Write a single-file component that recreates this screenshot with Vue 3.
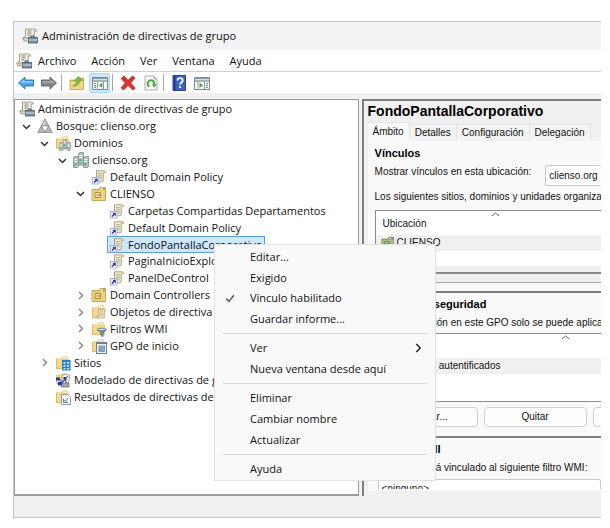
<script setup>
import { ref } from 'vue'

const menus = ['Archivo', 'Acción', 'Ver', 'Ventana', 'Ayuda']

const tree = [
  { level: 0, icon: 'console', text: 'Administración de directivas de grupo' },
  { level: 1, icon: 'forest', text: 'Bosque: clienso.org', state: 'open' },
  { level: 2, icon: 'domains', text: 'Dominios', state: 'open' },
  { level: 3, icon: 'domain', text: 'clienso.org', state: 'open' },
  { level: 4, icon: 'link', text: 'Default Domain Policy' },
  { level: 4, icon: 'ou', text: 'CLIENSO', state: 'open' },
  { level: 5, icon: 'link', text: 'Carpetas Compartidas Departamentos' },
  { level: 5, icon: 'link', text: 'Default Domain Policy' },
  { level: 5, icon: 'link', text: 'FondoPantallaCorporativo' },
  { level: 5, icon: 'link', text: 'PaginaInicioExplorador' },
  { level: 5, icon: 'link', text: 'PanelDeControl' },
  { level: 4, icon: 'ou', text: 'Domain Controllers', state: 'closed' },
  { level: 4, icon: 'objects', text: 'Objetos de directiva de grupo', state: 'closed' },
  { level: 4, icon: 'filters', text: 'Filtros WMI', state: 'closed' },
  { level: 4, icon: 'starter', text: 'GPO de inicio', state: 'closed' },
  { level: 2, icon: 'sites', text: 'Sitios', state: 'closed' },
  { level: 2, icon: 'modeling', text: 'Modelado de directivas de grupo' },
  { level: 2, icon: 'results', text: 'Resultados de directivas de grupo' },
]
const selected = ref(8)

const tabs = ['Ámbito', 'Detalles', 'Configuración', 'Delegación']
const activeTab = ref(0)

const contextMenu = [
  [{ text: 'Editar...' }, { text: 'Exigido' }, { text: 'Vínculo habilitado', checked: true }, { text: 'Guardar informe...' }],
  [{ text: 'Ver', submenu: true }, { text: 'Nueva ventana desde aquí' }],
  [{ text: 'Eliminar' }, { text: 'Cambiar nombre' }, { text: 'Actualizar' }],
  [{ text: 'Ayuda' }],
]
</script>

<template>
  <div class="desktop">
    <svg class="sprite" aria-hidden="true">
      <symbol id="folder" viewBox="0 0 16 16">
        <path d="M1 3.500h5.500l1-2H13v2.500h1V14H1z" fill="#e2bf67" />
        <path d="M8 2.300h4.500v1.500H7.200z" fill="#f8f4e3" />
        <path d="M1 3.500h5.500l1 1H14V14H1z" fill="#f3d98d" />
        <path d="M1.500 4v9.500h12" fill="none" stroke="#dcbb68" />
      </symbol>
      <symbol id="server" viewBox="0 0 6 12">
        <path d="M.5 1.500 2 .5h3.500v10L4.500 11.500h-4z" fill="#b4c0c2" stroke="#7c8c8f" stroke-width=".8" />
        <path d="M1.200 3.500h3M1.200 5.500h3" stroke="#eef4f4" />
        <rect x="1.500" y="7.200" width="2" height="2" fill="#3fbf3f" />
      </symbol>
      <symbol id="scroll" viewBox="0 0 16 16">
        <path d="M4 1.500h8.500q2 0 2 2H12V12q0 2-2 2H2.500q-1.500 0-1.500-2h3z" fill="#f5f1dc" stroke="#8f8869" stroke-width=".9" />
        <path d="M12 3.500q0-2 1.500-2t1.300 2z" fill="#d9c98c" />
        <path d="M9.800 3H12v9.500q-.5 1-2.200 1z" fill="#e3d9ac" />
        <path d="M5.500 4.500h4.500M5.500 6.500h4.500M5.500 8.500h4.500M5.500 10.500h4.500" stroke="#99977f" stroke-width=".8" />
      </symbol>
      <symbol id="console" viewBox="0 0 16 16">
        <path d="M3.500 1h9q2 0 2 2h-2.300v8H1q-.5-2 2.500-2z" fill="#f2efe1" stroke="#8d8a7c" stroke-width=".8" />
        <path d="M1 10h8v3H2q-1.200-1-1-3z" fill="#d8d4c2" stroke="#8d8a7c" stroke-width=".7" />
        <path d="M5.500 3h4M5.500 5h4M5.500 7h3" stroke="#85837a" />
        <path d="M9 9.500V8h3v1.500" fill="none" stroke="#3c4854" />
        <rect x="6.500" y="9.500" width="9" height="5.500" fill="#7b90a3" stroke="#4b5b6a" stroke-width=".8" />
        <path d="M6.500 12h9" stroke="#d3dde6" />
      </symbol>
      <symbol id="forest" viewBox="0 0 16 16">
        <path d="M8 1 15.200 14.500H.8z" fill="#dcdcdc" stroke="#777" stroke-width=".9" />
        <path d="M8 1v6.500h3.500zM4.300 8 8 14.500H.8zM11.700 8l3.500 6.500H8z" fill="#b4b4b4" />
        <path d="M4.300 7.800h7.400L8 14.500z" fill="#fafafa" stroke="#777" stroke-width=".8" />
      </symbol>
      <symbol id="domain" viewBox="0 0 16 16">
        <use href="#server" x="5" y="0" width="6" height="12" />
        <use href="#server" x="0" y="4" width="6" height="12" />
        <use href="#server" x="10" y="4" width="6" height="12" />
        <path d="M5.500 13h5" stroke="#66787b" />
      </symbol>
      <symbol id="domains" viewBox="0 0 16 16">
        <use href="#folder" width="16" height="16" />
        <use href="#domain" x="4" y="4" width="12" height="12" />
      </symbol>
      <symbol id="link" viewBox="0 0 16 16">
        <use href="#scroll" x="2" y="0" width="14" height="15" />
        <rect x="1.500" y="8.500" width="6.500" height="6.500" fill="#f4f5fc" stroke="#9ea3c4" stroke-width=".8" />
        <path d="M3 13.500 5.800 10.700" stroke="#22308f" stroke-width="1.400" />
        <path d="M3.300 9.800h3.400v3.400z" fill="#22308f" />
      </symbol>
      <symbol id="ou" viewBox="0 0 16 16">
        <path d="M1 3.500h7l1-2h5.500v13H1z" fill="#e4be60" stroke="#bd983f" stroke-width=".8" />
        <path d="M9.500 2.500H12v1H9z" fill="#fff" /><path d="M12 2.500h2v1h-2z" fill="#3f91dc" />
        <path d="M1.500 4.500h12.500V14H1.500z" fill="#efd07c" />
        <path d="M4 6.500h5.500v5H4z" fill="#f6e2a8" stroke="#a98c45" />
        <path d="M5.500 9h4" stroke="#94793a" />
      </symbol>
      <symbol id="objects" viewBox="0 0 16 16">
        <use href="#folder" width="16" height="16" />
        <use href="#scroll" x="5" y="4" width="11" height="12" />
      </symbol>
      <symbol id="filters" viewBox="0 0 16 16">
        <use href="#folder" width="16" height="16" />
        <path d="M6 8.500h9.500L12 12v3.500l-2-1V12z" fill="#7c94a8" stroke="#536b80" stroke-width=".8" />
        <ellipse cx="10.700" cy="8.500" rx="4.600" ry="1.300" fill="#c6d8e6" stroke="#536b80" stroke-width=".7" />
      </symbol>
      <symbol id="starter" viewBox="0 0 16 16">
        <use href="#folder" width="16" height="16" />
        <rect x="5.500" y="4.500" width="10" height="11" fill="#e9f1f8" stroke="#6d7f92" />
        <path d="M5.500 5.500h10" stroke="#6d7f92" />
        <path d="M8 8h5.500v5.500H8z" fill="#a9c5df" stroke="#56789b" stroke-width=".7" />
        <path d="M8 10h5M8 12h5" stroke="#56789b" stroke-width=".7" />
      </symbol>
      <symbol id="sites" viewBox="0 0 16 16">
        <use href="#folder" width="16" height="16" />
        <rect x="7" y="5" width="8.500" height="10.500" fill="#2b7ccc" />
        <path d="M8.500 7h2v1.800h-2zM12 7h2v1.800h-2zM8.500 10h2v1.800h-2zM12 10h2v1.800h-2zM8.500 13h2v1.500h-2zM12 13h2v1.500h-2z" fill="#d2ecff" />
      </symbol>
      <symbol id="modeling" viewBox="0 0 16 16">
        <path d="M1 2.500h5l1-1h5V12H1z" fill="#ead28f" />
        <path d="M7 3.500q4-3 8 0L13 12H7z" fill="#f1eee2" stroke="#9a988b" stroke-width=".8" />
        <path d="M1 5.500h4v3H1zM3 10h4v3.500H3zM8.500 5h3v3h-3z" fill="#2637a9" />
        <path d="m5 8 3 2 5-6M6 13l4-6 2 6" fill="none" stroke="#434d9d" />
        <path d="M8 11h6v4H6z" fill="#a5a8ad" stroke="#666" stroke-width=".7" />
      </symbol>
      <symbol id="results" viewBox="0 0 16 16">
        <use href="#folder" width="16" height="16" />
        <path d="M6.500 5.500h6l3 3v7h-9z" fill="#f8f9fa" stroke="#8c9298" stroke-width=".9" />
        <path d="M8.500 9.500v4h4.500M9 11l1.500 1.500 2.500-3.500" fill="none" stroke="#4878a8" stroke-width=".9" />
      </symbol>
      <symbol id="back" viewBox="0 0 16 16">
        <path d="M.5 8 7 2v3h8.500v6H7v3z" fill="#4ba3e3" stroke="#2477b8" stroke-width=".9" />
        <path d="M2.300 7.800 6.300 4.300v2h8.200v1.500z" fill="#91d0f6" />
      </symbol>
      <symbol id="forward" viewBox="0 0 16 16">
        <path d="M15.500 8 9 2v3H.5v6H9v3z" fill="#868686" stroke="#606060" stroke-width=".9" />
        <path d="M13.700 7.800 9.700 4.300v2H1.500v1.500z" fill="#acacac" />
      </symbol>
      <symbol id="up" viewBox="0 0 16 16">
        <path d="M1 5h6l1-2h6.500v11.500H1z" fill="#e3bc5c" stroke="#c0983a" stroke-width=".7" />
        <path d="M1.500 6.500H14V14H1.500z" fill="#f2d687" />
        <path d="M3.500 11q3.500-.5 4-5.500H5.300L9.500 1.500 13 5.500h-2.300q-.7 6-7.200 5.500z" fill="#7cc04c" stroke="#4f9630" stroke-width=".6" />
      </symbol>
      <symbol id="panel-left" viewBox="0 0 16 16">
        <path d="M.5 2.500h15v12H.5z" fill="#f8f9fa" stroke="#7d8791" />
        <path d="M1 3.500h14M1 6h14" stroke="#8e98a2" stroke-width="1.300" />
        <path d="M5.500 7v7.500M11.500 7v7.500" stroke="#8e98a2" />
        <path d="M2 8.500h2M2 10.500h2M2 12.500h2" stroke="#6886a3" />
        <path d="M10.300 7.800v5L7 10.300z" fill="#3ea535" />
      </symbol>
      <symbol id="panel-right" viewBox="0 0 16 16">
        <path d="M.5 2.500h15v12H.5z" fill="#f8f9fa" stroke="#7d8791" />
        <path d="M1 3.500h14M1 6h14" stroke="#8e98a2" stroke-width="1.300" />
        <path d="M4 7v7.500M10.500 7v7.500" stroke="#8e98a2" />
        <path d="M12 8.500h2M12 10.500h2M12 12.500h2" stroke="#6886a3" />
        <path d="M5.500 7.800v5L9 10.300z" fill="#3ea535" />
      </symbol>
      <symbol id="delete" viewBox="0 0 16 16">
        <path d="M1 3.500 4 1l4 4.300L12.500 1 15 3l-4.300 5 4.500 5.300L13 15l-5-4.500L3.500 15 1 12.800 5.300 8z" fill="#dc342c" stroke="#a81e1b" stroke-width=".7" />
      </symbol>
      <symbol id="refresh" viewBox="0 0 16 16">
        <path d="M2 1h9l3 3v11H2z" fill="#f7f8f7" stroke="#a0a5a0" stroke-width=".9" />
        <path d="M11 1v3h3" fill="#ddd" stroke="#a0a5a0" stroke-width=".8" />
        <path d="M6.300 11.500A3.300 3.300 0 1 1 11.200 9" fill="none" stroke="#45a73a" stroke-width="1.800" />
        <path d="m8.700 9 5 .2-2.500 3.300z" fill="#45a73a" />
      </symbol>
      <symbol id="help" viewBox="0 0 16 16">
        <path d="M2 .5h12.500v15H2z" fill="#3e62c4" stroke="#27408f" />
        <path d="M3.500 1v14" stroke="#223a91" stroke-width="2" />
        <path d="M6.500 5.500q0-2.300 2.600-2.300t2.600 2.300c0 2-2.600 2-2.600 4.200M9.100 11v2" fill="none" stroke="#fff" stroke-width="1.800" />
      </symbol>
    </svg>

    <main class="window">
      <header class="titlebar">
        <svg class="icon"><use href="#console" /></svg>
        <h1>Administración de directivas de grupo</h1>
      </header>

      <nav class="menubar" aria-label="Menú">
        <svg class="icon"><use href="#console" /></svg>
        <button v-for="m in menus" :key="m" type="button">{{ m }}</button>
      </nav>

      <div class="toolbar" role="toolbar">
        <button type="button" aria-label="Atrás"><svg class="icon"><use href="#back" /></svg></button>
        <button type="button" aria-label="Adelante"><svg class="icon"><use href="#forward" /></svg></button>
        <i class="rule"></i>
        <button type="button" aria-label="Subir un nivel"><svg class="icon"><use href="#up" /></svg></button>
        <button type="button" class="pressed" aria-label="Árbol de consola"><svg class="icon"><use href="#panel-left" /></svg></button>
        <i class="rule"></i>
        <button type="button" aria-label="Eliminar"><svg class="icon"><use href="#delete" /></svg></button>
        <button type="button" aria-label="Actualizar"><svg class="icon"><use href="#refresh" /></svg></button>
        <i class="rule"></i>
        <button type="button" aria-label="Ayuda"><svg class="icon"><use href="#help" /></svg></button>
        <button type="button" aria-label="Panel de acciones"><svg class="icon"><use href="#panel-right" /></svg></button>
      </div>

      <div class="work">
        <section class="tree-pane">
          <ul class="tree" role="tree">
            <li v-for="(n, i) in tree" :key="i" role="treeitem" :class="['node', 'level-' + n.level]">
              <span v-if="n.level" class="twisty">
                <svg v-if="n.state" :class="n.state" viewBox="0 0 9 9"><path d="m1 3 3.500 3.500L8 3" /></svg>
              </span>
              <button type="button" :class="['label', { selected: selected === i }]" @click="selected = i">
                <svg class="icon"><use :href="'#' + n.icon" /></svg>
                <span>{{ n.text }}</span>
              </button>
            </li>
          </ul>
        </section>

        <section class="detail">
          <h2>FondoPantallaCorporativo</h2>
          <div class="tabs" role="tablist">
            <button v-for="(t, i) in tabs" :key="t" type="button" role="tab" :class="{ active: activeTab === i }" @click="activeTab = i">{{ t }}</button>
          </div>
          <div class="page">
            <div class="block links">
              <h3>Vínculos</h3>
              <div class="field">
                <label for="place">Mostrar vínculos en esta ubicación:</label>
                <select id="place"><option>clienso.org</option></select>
              </div>
              <p>Los siguientes sitios, dominios y unidades organizativas están vinculados a este GPO:</p>
              <table class="list">
                <thead><tr><th>Ubicación<svg class="sort" viewBox="0 0 9 5"><path d="m1 4 3.500-3L8 4" /></svg></th></tr></thead>
                <tbody><tr><td><svg class="icon ou-muted"><use href="#ou" /></svg>CLIENSO</td></tr></tbody>
              </table>
            </div>
            <div class="divider"></div>
            <div class="block security">
              <h3>Filtrado de seguridad</h3>
              <p>La configuración en este GPO solo se puede aplicar a los siguientes grupos, usuarios y equipos:</p>
              <table class="list">
                <thead><tr><th>Nombre<svg class="sort" viewBox="0 0 9 5"><path d="m1 4 3.500-3L8 4" /></svg></th></tr></thead>
                <tbody><tr><td><svg class="icon"><use href="#domain" /></svg>Usuarios autentificados</td></tr></tbody>
              </table>
              <div class="actions">
                <button type="button">Agregar...</button>
                <button type="button">Quitar</button>
                <button type="button" disabled>Propiedades</button>
              </div>
            </div>
            <div class="block wmi">
              <h3>Filtrado WMI</h3>
              <label for="wmi">Este GPO está vinculado al siguiente filtro WMI:</label>
              <div class="clip"><select id="wmi"><option>&lt;ninguno&gt;</option></select></div>
            </div>
          </div>
        </section>
      </div>
      <footer class="status"></footer>
    </main>

    <div class="context" role="menu">
      <div v-for="(group, g) in contextMenu" :key="g" class="group">
        <button v-for="item in group" :key="item.text" type="button" role="menuitem">
          <svg class="mark" viewBox="0 0 9 9"><path v-if="item.checked" d="m1 5 2.500 2.500L8 2" /></svg>
          <span>{{ item.text }}</span>
          <svg v-if="item.submenu" class="arrow" viewBox="0 0 9 9"><path d="m3 1 3.500 3.500L3 8" /></svg>
        </button>
      </div>
    </div>
  </div>
</template>

<style>
body { background: #fff; }
</style>

<style scoped>
.desktop {
  box-sizing: border-box;
  min-height: 100vh;
  padding: 21px 9px 10px 13px;
  display: flex;
  position: relative;
  overflow: hidden;
  font: 11px/16px "Open Sans", "Noto Sans", sans-serif;
  color: #111;
}
.desktop * { box-sizing: border-box; }
.sprite { position: absolute; width: 0; height: 0; }
h1, h2, h3, p, ul { margin: 0; padding: 0; font-size: inherit; font-weight: normal; }
button { font: inherit; color: inherit; background: none; border: 0; padding: 0; white-space: nowrap; }
.icon { width: 16px; height: 16px; flex: none; display: block; }

.window {
  flex: 1;
  min-width: 0;
  display: flex;
  flex-direction: column;
  background: #f0f0f0;
  border: 1px solid #c4c4c6;
  border-right: 0;
}
.titlebar { height: 28px; display: flex; align-items: center; gap: 4px; padding: 0 8px; background: #f3f3f3; }
.menubar { height: 22px; display: flex; align-items: center; gap: 15px; padding: 0 2px; background: #fff; border-bottom: 1px solid #d0d0d0; }
.menubar .icon { margin-right: -9px; }
.toolbar { height: 21px; display: flex; align-items: center; gap: 2px; background: #fff; padding-left: 1px; }
.toolbar button { width: 21px; height: 20px; display: grid; place-items: center; }
.toolbar .pressed { background: #cce8ff; border: 1px solid #a9d6fb; border-radius: 2px; }
.rule { width: 1px; height: 17px; margin-right: 2px; background: #a6a6a6; }

.work { flex: 1; margin-top: 6px; display: grid; grid-template-columns: 59fr 41fr; gap: 3px; min-height: 0; }
.tree-pane { background: #fff; border: 1px solid #9a9aa2; border-bottom-width: 2px; min-width: 0; overflow: hidden; }
.tree { list-style: none; height: 304px; margin-top: 1px; display: grid; grid-auto-rows: 1fr; padding-left: 2px; }
.node { display: flex; align-items: center; min-height: 0; }
.level-2 { padding-left: 18px; }
.level-3 { padding-left: 36px; }
.level-4 { padding-left: 54px; }
.level-5 { padding-left: 72px; }
.twisty { width: 18px; display: grid; place-items: center; }
.twisty svg { width: 9px; height: 9px; fill: none; stroke: #333; stroke-width: 1.500; }
.twisty .closed { transform: rotate(-90deg); stroke: #8a8a8a; }
.label { height: 17px; display: flex; align-items: center; gap: 3px; border: 1px solid transparent; padding: 0 2px 0 1px; }
.label.selected { background: #cce8ff; border-color: #5c9fe0; }

.detail {
  border-left: 2px solid #7f7f7f;
  border-top: 2px solid #7f7f7f;
  padding: 0 0 5px 4px;
  min-width: 0;
  overflow: hidden;
  display: flex;
  flex-direction: column;
  font: 10px/14px "Liberation Sans", Arial, sans-serif;
  white-space: nowrap;
}
.detail h2 { font-size: 14px; line-height: 21px; font-weight: bold; color: #000; }
.tabs { display: flex; align-items: flex-end; }
.tabs button { height: 17px; padding: 0 5px; border: 1px solid #e4e4e4; border-width: 1px 1px 0 0; background: #f3f3f3; }
.tabs .active { height: 19px; background: #f9f9f9; }
.page { flex: 1; background: #f9f9f9; display: flex; flex-direction: column; }
.block { padding-left: 7px; }
h3 { font-size: 11px; font-weight: bold; color: #000; }
.links { padding-top: 5px; }
.field { display: flex; gap: 14px; height: 27px; padding-top: 5px; }
select { appearance: none; font: inherit; color: inherit; background: #fff; border: 1px solid #c9c9c9; border-radius: 2px; padding: 0 3px; margin: 0; }
.field select { flex: 1; min-width: 0; height: 21px; border-right: 0; }
.links p { padding-top: 3px; }
.list { width: 100%; border-spacing: 0; background: #fff; border: 1px solid #8d8d94; border-right: 0; }
.list th { position: relative; text-align: left; font-weight: normal; height: 24px; padding: 2px 7px 0; }
.list td { height: 16px; padding: 0 5px; background: #f0f0f0; }
.list td .icon { display: inline-block; vertical-align: middle; width: 14px; height: 14px; margin-right: 2px; }
.ou-muted { filter: hue-rotate(35deg) saturate(50%) brightness(85%); }
.sort { position: absolute; top: 1px; left: 115px; width: 9px; height: 5px; fill: none; stroke: #666; }
.links .list { margin-top: 6px; border-bottom: 15px solid #fff; }
.divider { background: #f0f0f0; padding: 6px 0 8px; border-bottom: 1px solid #a5a5ae; }
.divider::before { content: ""; display: block; height: 2px; background: #8a8a8a; }
.security { margin-top: 8px; border-top: 2px solid #7a7a7a; padding-top: 4px; }
.security p { padding-top: 5px; }
.security .list { margin-top: 3px; }
.security .sort { left: 185px; }
.security tbody::after { content: ""; display: block; height: 27px; }
.actions { display: flex; gap: 6px; padding: 5px 0 9px; }
.actions button { flex: 0 0 103px; height: 20px; background: #fefefe; border: 1px solid #d0d0d0; border-radius: 4px; }
.wmi { border-top: 2px solid #7f7f7f; padding-top: 4px; flex: 1; }
.wmi label { display: block; padding: 5px 0 4px; }
.clip { height: 10px; overflow: hidden; margin-left: 3px; }
.clip select { width: 100%; height: 20px; }

.status { height: 21px; }

.context {
  position: absolute;
  left: 214px;
  top: 244px;
  width: 222px;
  padding: 2px 8px 1px;
  background: #f9f9f9;
  border: 1px solid #e2e2e2;
}
.group { display: grid; grid-auto-rows: 1fr; }
.group + .group { margin-top: 4px; padding-top: 4px; border-top: 1px solid #d9d9d9; }
.group:nth-child(1) { height: 82px; }
.group:nth-child(2) { height: 46px; }
.group:nth-child(3) { height: 67px; }
.group:nth-child(4) { height: 25px; }
.context button { display: flex; align-items: center; gap: 15px; padding: 0 4px 0 2px; min-height: 0; }
.context svg { width: 10px; height: 10px; fill: none; stroke: #555; stroke-width: 1.300; }
.context .arrow { margin-left: auto; stroke: #222; }
</style>
